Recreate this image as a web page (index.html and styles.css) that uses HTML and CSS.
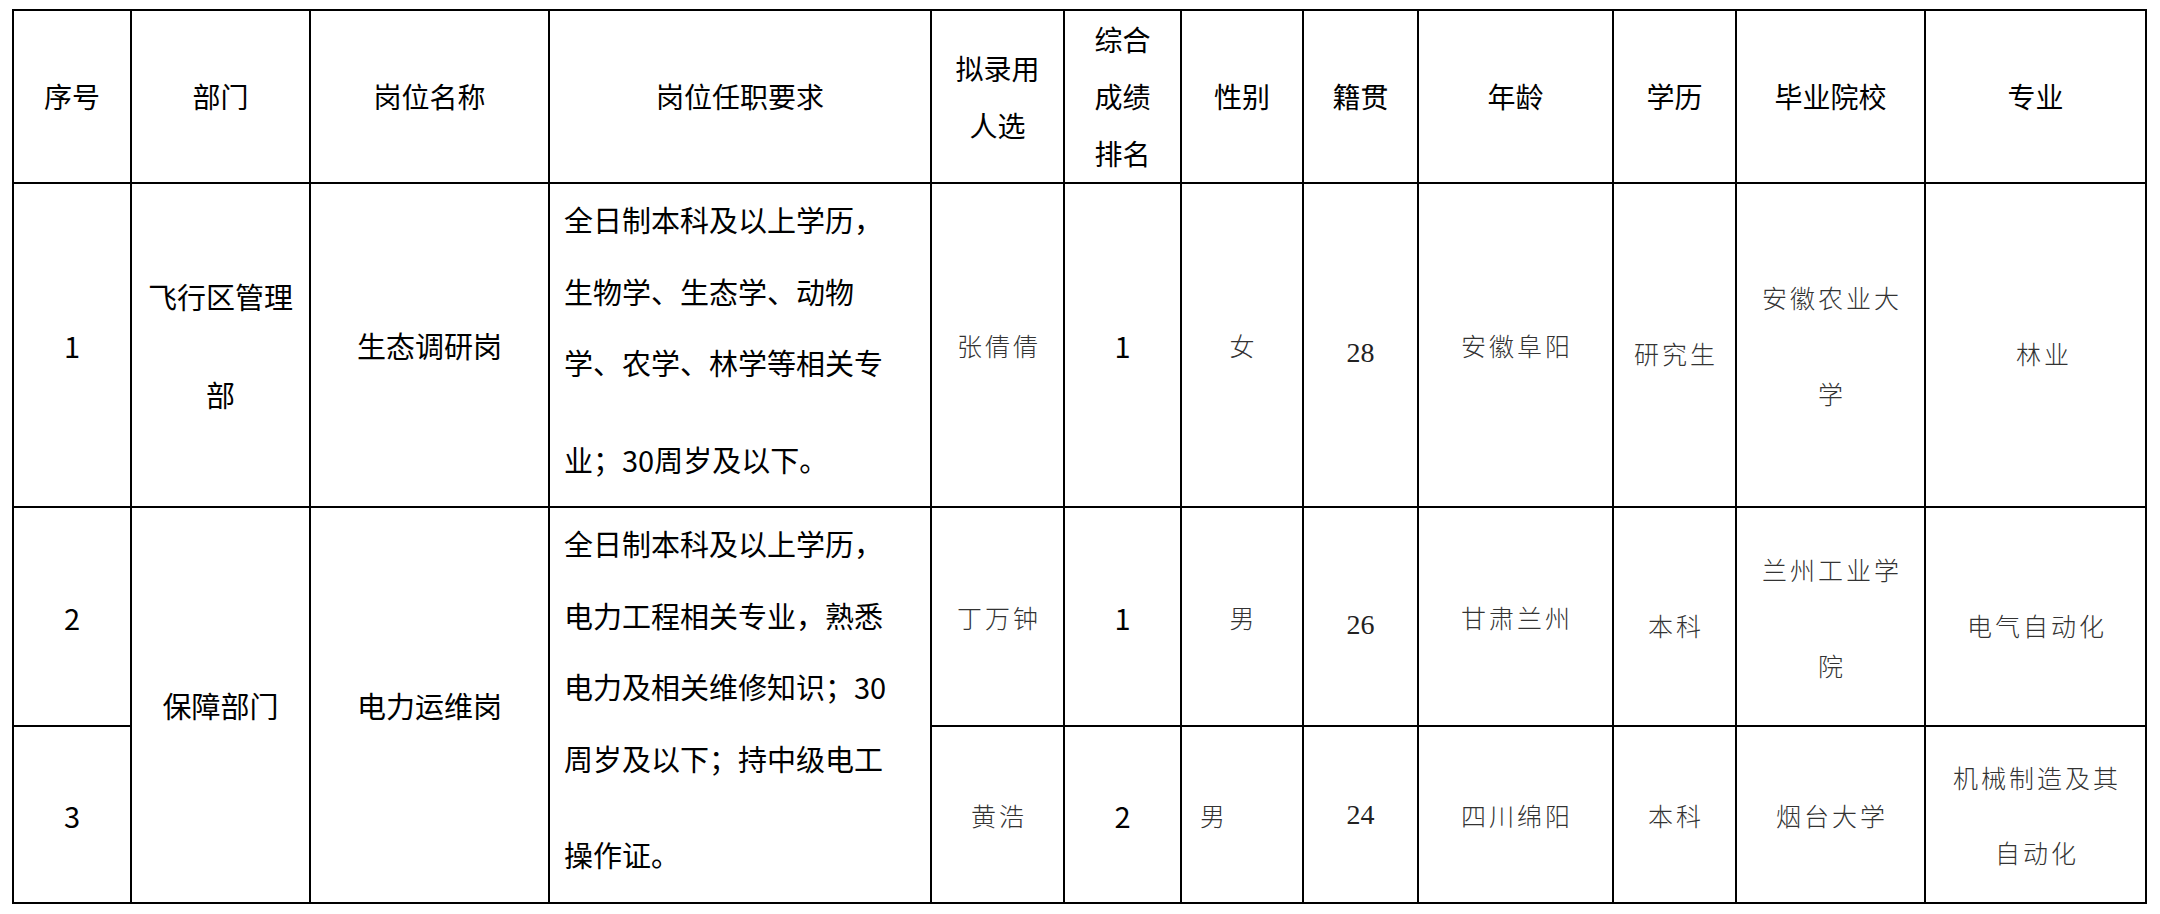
FILE: index.html
```html
<!DOCTYPE html>
<html lang="zh-CN">
<head>
<meta charset="utf-8">
<title>拟录用人员名单</title>
<link rel="stylesheet" href="styles.css">
</head>
<body>
<div class="sheet">
<table class="roster">
  <colgroup>
    <col class="c-no"><col class="c-dept"><col class="c-post"><col class="c-req">
    <col class="c-name"><col class="c-rank"><col class="c-sex"><col class="c-age">
    <col class="c-origin"><col class="c-edu"><col class="c-school"><col class="c-major">
  </colgroup>
  <thead>
    <tr class="head">
      <th>序号</th>
      <th>部门</th>
      <th>岗位名称</th>
      <th>岗位任职要求</th>
      <th>拟录用<br>人选</th>
      <th>综合<br>成绩<br>排名</th>
      <th>性别</th>
      <th>籍贯</th>
      <th>年龄</th>
      <th>学历</th>
      <th>毕业院校</th>
      <th>专业</th>
    </tr>
  </thead>
  <tbody>
    <tr class="r1">
      <td class="num">1</td>
      <td class="dept">飞行区管理<br>部</td>
      <td class="post">生态调研岗</td>
      <td class="req">全日制本科及以上学历，<br>生物学、生态学、动物<br>学、农学、林学等相关专<span class="last">业；30周岁及以下。</span></td>
      <td class="thin">张倩倩</td>
      <td class="num">1</td>
      <td class="thin">女</td>
      <td class="age low">28</td>
      <td class="thin">安徽阜阳</td>
      <td class="thin low">研究生</td>
      <td class="thin two">安徽农业大<br>学</td>
      <td class="thin low shift">林业</td>
    </tr>
    <tr class="r2">
      <td class="num">2</td>
      <td class="dept" rowspan="2">保障部门</td>
      <td class="post" rowspan="2">电力运维岗</td>
      <td class="req" rowspan="2">全日制本科及以上学历，<br>电力工程相关专业，熟悉<br>电力及相关维修知识；30<br>周岁及以下；持中级电工<span class="last">操作证。</span></td>
      <td class="thin">丁万钟</td>
      <td class="num">1</td>
      <td class="thin">男</td>
      <td class="age low">26</td>
      <td class="thin">甘肃兰州</td>
      <td class="thin low">本科</td>
      <td class="thin two">兰州工业学<br>院</td>
      <td class="thin low">电气自动化</td>
    </tr>
    <tr class="r3">
      <td class="num">3</td>
      <td class="thin">黄浩</td>
      <td class="num">2</td>
      <td class="thin left">男</td>
      <td class="age">24</td>
      <td class="thin">四川绵阳</td>
      <td class="thin">本科</td>
      <td class="thin">烟台大学</td>
      <td class="thin tight">机械制造及其<br>自动化</td>
    </tr>
  </tbody>
</table>
</div>
</body>
</html>
```
FILE: styles.css
```css
* { box-sizing: border-box; }

body {
  margin: 0;
  background: #fff;
  color: #000;
  font-family: "Noto Sans CJK SC", "Noto Sans", sans-serif;
}

.sheet {
  padding: 9px 0 0 12px;
}

.roster {
  border-collapse: collapse;
  table-layout: fixed;
  width: 2135px;
}

th,
td {
  border: 2px solid #000;
  padding: 0;
  text-align: center;
  vertical-align: middle;
}

.c-no { width: 118px; }
.c-dept { width: 179px; }
.c-post { width: 239px; }
.c-req { width: 382px; }
.c-name { width: 133px; }
.c-rank { width: 117px; }
.c-sex { width: 122px; }
.c-age { width: 115px; }
.c-origin { width: 195px; }
.c-edu { width: 123px; }
.c-school { width: 189px; }
.c-major { width: 221px; }

.head { height: 173px; }
.r1 { height: 324px; }
.r2 { height: 219px; }
.r3 { height: 177px; }

th {
  font-size: 28px;
  font-weight: 400;
  line-height: 57px;
}

.num,
.post {
  font-size: 29px;
  line-height: 40px;
}

.dept {
  font-size: 29px;
  line-height: 98px;
}

.req {
  text-align: left;
  vertical-align: top;
  padding-left: 14px;
  font-size: 29px;
  line-height: 71.6px;
}

.req .last {
  display: block;
  margin-top: 25px;
}

.thin {
  font-size: 25px;
  font-weight: 300;
  letter-spacing: 3px;
  padding-left: 3px;
  color: #333;
  line-height: 40px;
}

.age {
  font-family: "Liberation Serif", "Noto Sans CJK SC", serif;
  font-size: 28px;
  color: #222;
  line-height: 40px;
}

.low { padding-top: 16px; }

.two { line-height: 96px; }

.tight { line-height: 75px; }

.thin.left {
  text-align: left;
  padding-left: 18px;
}

.thin.shift { padding-left: 17px; }
```
